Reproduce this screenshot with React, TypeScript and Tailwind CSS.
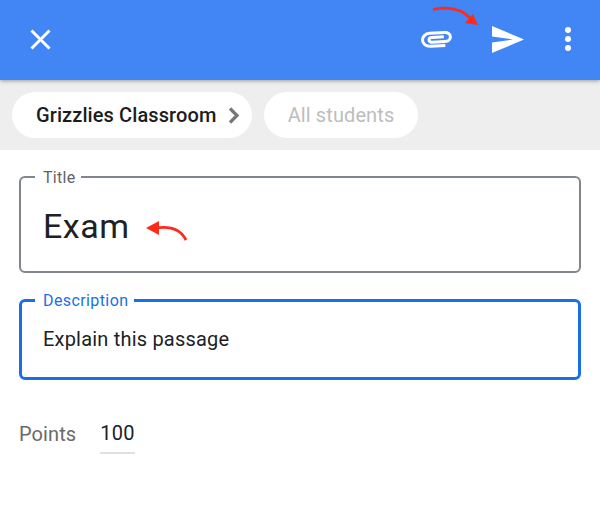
export default function App() {
  return (
    <div className="relative w-[600px] h-[507px] bg-white overflow-hidden font-['Roboto',sans-serif]">
      {/* App bar */}
      <header className="relative z-10 h-[80px] bg-[#4285f4] shadow-[0_1px_4px_rgba(0,0,0,0.35)] flex items-center pl-[30px] pb-[2px]">
        <svg width="21" height="21" viewBox="0 0 21 21" className="shrink-0">
          <path d="M1.5 1.5 L19.5 19.5 M19.5 1.5 L1.5 19.5" stroke="#fff" strokeWidth="3" fill="none" />
        </svg>
        <div className="ml-auto flex items-center">
          {/* paperclip */}
          <svg width="31" height="17" viewBox="0 0 31 17" className="mr-[40px]">
            <path
              transform="rotate(-3 15.5 8.5)"
              d="M24 15 H9 C4.5 15 1.5 12 1.5 8.5 C1.5 5 4.5 2 9 2 H24 C27.5 2 29.5 4 29.5 6.5 C29.5 9 27.5 11 24 11 H11 C9.5 11 8 10 8 8.5 C8 7 9.5 6.2 11 6.2 H23"
              stroke="#fff"
              strokeWidth="3"
              fill="none"
            />
          </svg>
          {/* send */}
          <svg width="32" height="27" viewBox="0 0 32 27" className="mr-[41px]">
            <path d="M0 0 L32 13.5 L0 27 L0 16.5 L21 13.5 L0 10.5 Z" fill="#fff" />
          </svg>
          {/* more */}
          <div className="flex flex-col gap-[3px] mr-[29px]">
            <span className="w-[6px] h-[6px] rounded-full bg-white" />
            <span className="w-[6px] h-[6px] rounded-full bg-white" />
            <span className="w-[6px] h-[6px] rounded-full bg-white" />
          </div>
        </div>
      </header>

      {/* Recipients */}
      <div className="h-[70px] bg-[#eeeeee] flex items-center gap-[12px] pl-[12px]">
        <div className="w-[240px] h-[46px] rounded-full bg-white flex items-center pl-[24px] text-[20px] font-medium tracking-[0.1px] text-[#1c1c1c]">
          <span>Grizzlies Classroom</span>
          <svg width="12" height="17" viewBox="0 0 12 17" className="ml-[12px]">
            <path d="M2 1.5 L9 8.5 L2 15.5" stroke="#777" strokeWidth="3.2" fill="none" />
          </svg>
        </div>
        <div className="w-[154px] h-[46px] rounded-full bg-white flex items-center justify-center text-[20px] tracking-[0.1px] text-[#bdbdbd]">
          All students
        </div>
      </div>

      {/* Form */}
      <main className="pt-[26px] px-[19px]">
        <div className="relative h-[97px] border-2 border-[#80868b] rounded-[6px] flex items-center pl-[22px]">
          <span className="absolute left-[14px] top-[-10px] bg-white pl-[8px] pr-[5px] text-[16px] leading-[20px] tracking-[0.3px] text-[#5f6368]">
            Title
          </span>
          <span className="text-[34px] leading-none tracking-[0.5px] text-[#202124] pt-[2px]">Exam</span>
        </div>
        <div className="relative mt-[26px] h-[81px] border-[3px] border-[#1a6fe8] rounded-[6px] flex items-center pl-[21px]">
          <span className="absolute left-[13px] top-[-11px] bg-white pl-[8px] pr-[6px] text-[16px] leading-[20px] tracking-[0.4px] text-[#1a6fe8]">
            Description
          </span>
          <span className="text-[20px] leading-none tracking-[0.2px] text-[#202124] pb-[2px]">Explain this passage</span>
        </div>
        <div className="mt-[33px] flex items-start">
          <span className="w-[81px] pt-[9px] text-[20px] leading-[24px] tracking-[0.1px] text-[#6a6a6a]">Points</span>
          <div className="w-[35px] h-[41px] border-b-[2px] border-[#e0e0e0] text-center text-[20px] tracking-[0.2px] leading-[40px] text-[#202124]">
            100
          </div>
        </div>
      </main>

      {/* Red annotation arrows */}
      <svg className="absolute left-0 top-0 z-20 pointer-events-none" width="600" height="507" viewBox="0 0 600 507">
        <path d="M433 9.5 C450 6 463 10 471 19" stroke="#ff2a1a" strokeWidth="2.8" fill="none" />
        <path d="M478 25 L465 23 L473 14 Z" fill="#ff2a1a" />
        <path d="M186 240 C181 230 170 226 156 228" stroke="#ff2a1a" strokeWidth="2.8" fill="none" />
        <path d="M146 228 L159 221 L159 235 Z" fill="#ff2a1a" />
      </svg>
    </div>
  );
}
